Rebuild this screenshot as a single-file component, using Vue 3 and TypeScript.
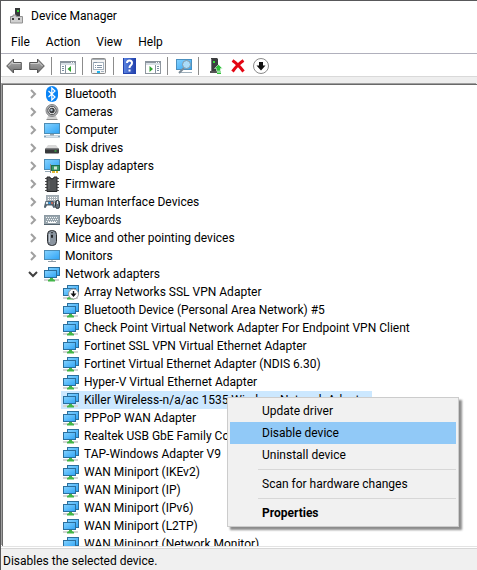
<script setup lang="ts">
import { ref } from 'vue'

interface Category {
  icon: string
  label: string
}

const categories: Category[] = [
  { icon: 'bluetooth', label: 'Bluetooth' },
  { icon: 'camera', label: 'Cameras' },
  { icon: 'computer', label: 'Computer' },
  { icon: 'disk', label: 'Disk drives' },
  { icon: 'display', label: 'Display adapters' },
  { icon: 'firmware', label: 'Firmware' },
  { icon: 'hid', label: 'Human Interface Devices' },
  { icon: 'keyboard', label: 'Keyboards' },
  { icon: 'mouse', label: 'Mice and other pointing devices' },
  { icon: 'monitor', label: 'Monitors' },
]

const adapters: string[] = [
  'Array Networks SSL VPN Adapter',
  'Bluetooth Device (Personal Area Network) #5',
  'Check Point Virtual Network Adapter For Endpoint VPN Client',
  'Fortinet SSL VPN Virtual Ethernet Adapter',
  'Fortinet Virtual Ethernet Adapter (NDIS 6.30)',
  'Hyper-V Virtual Ethernet Adapter',
  'Killer Wireless-n/a/ac 1535 Wireless Network Adapter',
  'PPPoP WAN Adapter',
  'Realtek USB GbE Family Controller',
  'TAP-Windows Adapter V9',
  'WAN Miniport (IKEv2)',
  'WAN Miniport (IP)',
  'WAN Miniport (IPv6)',
  'WAN Miniport (L2TP)',
  'WAN Miniport (Network Monitor)',
]

const disabledAdapter = 'Array Networks SSL VPN Adapter'
const selected = ref('Killer Wireless-n/a/ac 1535 Wireless Network Adapter')
const expanded = ref(true)
const menus = ['File', 'Action', 'View', 'Help']
</script>

<template>
  <div class="window">
    <svg class="defs" width="0" height="0" aria-hidden="true">
      <defs>
        <linearGradient id="screen" x1="0" y1="0" x2="1" y2="1">
          <stop offset="0" stop-color="#86d3ff" />
          <stop offset="1" stop-color="#2ea3f5" />
        </linearGradient>
        <linearGradient id="metal" x1="0" y1="0" x2="0" y2="1">
          <stop offset="0" stop-color="#b4b4b4" />
          <stop offset="1" stop-color="#6e6e6e" />
        </linearGradient>
        <linearGradient id="blue" x1="0" y1="0" x2="1" y2="0">
          <stop offset="0" stop-color="#5a83e0" />
          <stop offset="1" stop-color="#2443ae" />
        </linearGradient>
        <symbol id="i-bluetooth" viewBox="0 0 16 16">
          <rect x="2" y="0" width="12" height="16" rx="6" fill="#0a84f5" />
          <path d="M4.500 5l6.500 6-3.200 3V2l3.200 3-6.500 6" fill="none" stroke="#fff" stroke-width="1.200" />
        </symbol>
        <symbol id="i-camera" viewBox="0 0 16 16">
          <path d="M4 12h8l1.500 3.500h-11z" fill="#d2d2d2" />
          <path d="M2.500 15.500h11" stroke="#8b8b8b" />
          <circle cx="8" cy="6.500" r="6" fill="#b5b6b8" stroke="#86878a" />
          <circle cx="8" cy="6.500" r="4.200" fill="#e4e5e6" stroke="#4c4d4f" />
          <circle cx="8" cy="6.500" r="2.700" fill="#35373a" />
          <circle cx="7.500" cy="6" r="1.200" fill="#aebdcb" />
        </symbol>
        <symbol id="i-computer" viewBox="0 0 16 16">
          <rect x=".5" y="1.500" width="15" height="10" fill="url(#screen)" stroke="#4d8db5" />
          <path d="M6 12h4v1.500h-4z" fill="#9aa4ac" />
          <path d="M0 14.500h16" stroke="#8aa5b8" stroke-width="2" />
          <path d="M2 14.500h12" stroke="#d9e4ec" />
        </symbol>
        <symbol id="i-disk" viewBox="0 0 16 16">
          <path d="M4 5h8l3 4H1z" fill="#d9d9d9" />
          <rect x="1" y="8.500" width="14" height="5" rx=".8" fill="#38393b" />
          <path d="M1.500 9h13" stroke="#77787a" />
          <rect x="10.500" y="10.500" width="2" height="1" fill="#39e24a" />
        </symbol>
        <symbol id="i-display" viewBox="0 0 16 16">
          <rect x=".5" y="1.500" width="15" height="10" fill="url(#screen)" stroke="#4d8db5" />
          <path d="M1 13.500h5" stroke="#94a8b5" />
          <rect x="7.500" y="7.500" width="8" height="5" fill="#3b9a68" stroke="#1f6e49" />
          <rect x="10" y="8.500" width="3" height="3" fill="#cfe6d6" />
          <path d="M6.500 6v9" stroke="#8a8a8a" />
          <path d="M8 14h3M12 14h2" stroke="#e3b833" stroke-width="2" />
        </symbol>
        <symbol id="i-firmware" viewBox="0 0 16 16">
          <path d="M1 2.500h14M1 5.500h14M1 8.500h14M1 11.500h14M1 14.500h14" stroke="#555" />
          <path d="M3 1h3a2 2 0 0 0 4 0h3v14.500H3z" fill="#505254" stroke="#28292b" />
          <path d="M5 5v8" stroke="#6d6f71" />
        </symbol>
        <symbol id="i-keyboard" viewBox="0 0 16 16">
          <rect x=".5" y="3.500" width="15" height="9" fill="#98a5ad" stroke="#8b99a2" />
          <path d="M2 5.500h12M2 9.500h12" stroke="#f1f5f7" stroke-dasharray="1 1" />
          <path d="M3 7.500h11" stroke="#f1f5f7" stroke-dasharray="1 1" />
          <path d="M4 10.500h8" stroke="#fff" />
          <path d="M0 12.500h16" stroke="#53636e" />
        </symbol>
        <symbol id="i-hid" viewBox="0 0 16 16">
          <rect x="2.500" y="1.500" width="12" height="7" fill="#aab3b9" stroke="#a0abb3" />
          <path d="M4 3.500h10M4 5.500h10" stroke="#fff" stroke-dasharray="1 1" />
          <path d="M1.500 7h8l1.500 5.500q0 2-1.500 1.500L8 11.500H3L1.500 14Q0 14.500 0 12.500z" fill="#53636f" />
          <circle cx="3" cy="9" r="1.200" fill="#e5edf2" />
          <path d="M4.500 8h2v2h-2z" fill="#2f9be5" />
          <circle cx="8" cy="9" r="1" fill="#db6652" />
          <rect x="11.500" y="6.500" width="4" height="8" rx="2" fill="#63717c" stroke="#2d3337" />
          <path d="M13.500 7v3" stroke="#e5edf2" />
        </symbol>
        <symbol id="i-mouse" viewBox="0 0 16 16">
          <rect x="3.500" y=".5" width="9" height="15" rx="4" fill="#8a949f" stroke="#2b2d30" />
          <path d="M5.500 4v8" stroke="#c5ccd3" />
          <rect x="7" y="2" width="2" height="6" rx="1" fill="#25272a" />
          <path d="M8 3v2" stroke="#c4d7e8" />
        </symbol>
        <symbol id="i-monitor" viewBox="0 0 16 16">
          <rect x=".5" y="2.500" width="15" height="9" fill="url(#screen)" stroke="#4d8db5" />
          <path d="M8 12v1.500M4 13.500h8" stroke="#8f9da7" />
        </symbol>
        <symbol id="i-network" viewBox="0 0 16 16">
          <rect x="4.500" y="1.500" width="11" height="8" fill="url(#screen)" stroke="#2b6f9d" />
          <path d="M0 14h15" stroke="#d4d4d4" stroke-width="2" />
          <path d="M6 12h3v1l2 1v1.500H4V14l2-1z" fill="#43b649" />
          <rect x=".5" y="4.500" width="12" height="7" fill="url(#screen)" stroke="#2b6f9d" />
        </symbol>
        <symbol id="i-arrow" viewBox="0 0 16 16">
          <path d="M.7 8L7.500 1v3.500h7.800v7H7.500V15z" fill="url(#metal)" stroke="#555" />
          <path d="M2.500 8l4-4v1.500h8" fill="none" stroke="#ccc" />
        </symbol>
        <symbol id="i-panel" viewBox="0 0 16 16">
          <rect x=".5" y="3.500" width="15" height="12" fill="#fff" stroke="#8f979f" />
          <path d="M0 4h16" stroke="#8b949e" stroke-width="2" />
          <path d="M11 4.500h1M13 4.500h1" stroke="#fff" />
          <path d="M1 6h14" stroke="#d8dfe6" stroke-width="2" />
        </symbol>
      </defs>
    </svg>

    <header class="title-bar">
      <svg class="icon" viewBox="0 0 16 16" aria-hidden="true">
        <path d="M6 0h5v8H6z" fill="#38393b" />
        <rect x="8" y="2" width="2" height="2" fill="#35e035" />
        <path d="M1.500 8.500H4V7h3v1.500h6.500v6.500h-12z" fill="#d0d0d0" stroke="#929292" />
        <path d="M3 10h2v2H3zM9 10h2v2H9z" fill="#414141" />
      </svg>
      <h1 class="title">Device Manager</h1>
    </header>

    <nav class="menu-bar" aria-label="Main menu">
      <button v-for="menu in menus" :key="menu" type="button" class="menu-button">{{ menu }}</button>
    </nav>

    <div class="toolbar" role="toolbar" aria-label="Tools">
      <button type="button" class="tool" aria-label="Back">
        <svg class="icon"><use href="#i-arrow" /></svg>
      </button>
      <button type="button" class="tool" aria-label="Forward">
        <svg class="icon flipped"><use href="#i-arrow" /></svg>
      </button>
      <span class="divider"></span>
      <button type="button" class="tool" aria-label="Show or hide console tree">
        <svg class="icon" viewBox="0 0 16 16">
          <use href="#i-panel" width="16" height="16" />
          <path d="M5.500 7v8" stroke="#8793a0" />
          <path d="M2 8.500h2M2 10.500h2M2 12.500h2" stroke="#7c8fa3" />
          <path d="M11 8v6L7.500 11z" fill="#2fa32f" />
        </svg>
      </button>
      <span class="divider"></span>
      <button type="button" class="tool" aria-label="Properties">
        <svg class="icon" viewBox="0 0 16 16">
          <rect x=".5" y=".5" width="14" height="15" rx="1" fill="#f5f5f5" stroke="#8b8b8b" />
          <path d="M1 1.500h13" stroke="#a6adb3" />
          <rect x="2.500" y="4.500" width="10" height="7" fill="#fff" stroke="#a6b3bf" />
          <path d="M3 4.500h3M4 7.500h1M6 7.500h5M4 9.500h1M6 9.500h5" stroke="#8193a5" />
          <path d="M6 14h3" stroke="#20b4ee" stroke-width="2" />
          <path d="M10 13.500h3" stroke="#a6b3bf" />
        </svg>
      </button>
      <span class="divider"></span>
      <button type="button" class="tool" aria-label="Help">
        <svg class="icon" viewBox="0 0 16 16">
          <rect x="1" y="0" width="13" height="16" fill="#2443ae" />
          <rect x="2" y="0" width="11" height="15" fill="url(#blue)" />
          <path d="M5 5q0-2.500 2.500-2.500T10 5q0 1.500-1.300 2.300T7.500 10" fill="none" stroke="#fff" stroke-width="2" />
          <rect x="6.500" y="11.500" width="2" height="2" fill="#fff" />
        </svg>
      </button>
      <button type="button" class="tool" aria-label="Show or hide action pane">
        <svg class="icon" viewBox="0 0 16 16">
          <use href="#i-panel" width="16" height="16" />
          <path d="M10.500 7v8" stroke="#8793a0" />
          <path d="M12 8.500h2M12 10.500h2M12 12.500h2" stroke="#7c8fa3" />
          <path d="M4.500 8v6L8 11z" fill="#2fa32f" />
        </svg>
      </button>
      <span class="divider"></span>
      <button type="button" class="tool" aria-label="Scan for hardware changes">
        <svg class="icon" viewBox="0 0 16 16">
          <rect x=".5" y="1.500" width="15" height="10" fill="url(#screen)" stroke="#4a90c0" />
          <path d="M3 14.500h13" stroke="#9fb0bc" />
          <path d="M8 10l-5 5" stroke="#7c8b96" stroke-width="2" />
          <circle cx="10.500" cy="6.500" r="4" fill="#a9dcfa" stroke="#8298a6" />
        </svg>
      </button>
      <span class="divider"></span>
      <button type="button" class="tool" aria-label="Update driver">
        <svg class="icon" viewBox="0 0 16 16">
          <path d="M4 0h6l1 1v12H4z" fill="#3b3d3f" />
          <path d="M3 14h7" stroke="#555" stroke-width="2" />
          <path d="M4.500 1v12" stroke="#77797b" />
          <rect x="6" y="3" width="2" height="2" fill="#38e038" />
          <path d="M11.500 6.500l4 4H13.500v2.500h-4v-2.500h-2z" fill="#2fc13a" stroke="#fff" stroke-width=".5" />
          <path d="M10 14h4M10 15.500h4" stroke="#2fc13a" />
        </svg>
      </button>
      <button type="button" class="tool" aria-label="Uninstall device">
        <svg class="icon" viewBox="0 0 16 16">
          <path d="M2.500 2.500Q8 6 13.500 13.500M13.500 2.500Q8 6 2.500 13.500" fill="none" stroke="#e30613" stroke-width="3" />
        </svg>
      </button>
      <button type="button" class="tool" aria-label="Disable device">
        <svg class="icon" viewBox="0 0 16 16">
          <circle cx="8" cy="8" r="7.500" fill="#fff" stroke="#8a8a8a" />
          <path d="M6 4h4v3.500h2.500L8 12.500 3.500 7.500H6z" fill="#111" />
        </svg>
      </button>
    </div>

    <main class="tree-frame">
      <ul class="tree">
        <li v-for="item in categories" :key="item.label" class="row">
          <button type="button" class="chevron" :aria-label="'Expand ' + item.label">
            <svg class="chevron-icon" viewBox="0 0 8 10"><path d="M2 1l4 4-4 4" fill="none" stroke="#a0a0a0" stroke-width="2" /></svg>
          </button>
          <svg class="icon" aria-hidden="true"><use :href="'#i-' + item.icon" /></svg>
          <span class="label">{{ item.label }}</span>
        </li>
        <li>
          <div class="row">
            <button type="button" class="chevron" aria-label="Toggle network adapters" @click="expanded = !expanded">
              <svg class="chevron-icon open" viewBox="0 0 10 8"><path d="M1 2l4 4 4-4" fill="none" stroke="#404040" stroke-width="2" /></svg>
            </button>
            <svg class="icon" aria-hidden="true"><use href="#i-network" /></svg>
            <span class="label">Network adapters</span>
          </div>
          <ul v-if="expanded" class="children">
            <li
              v-for="name in adapters"
              :key="name"
              class="row child"
              :class="{ selected: name === selected }"
              @click="selected = name"
            >
              <svg class="icon" viewBox="0 0 16 16" aria-hidden="true">
                <use href="#i-network" width="16" height="16" />
                <g v-if="name === disabledAdapter">
                  <circle cx="10.500" cy="10" r="5" fill="#fff" stroke="#999" />
                  <path d="M9.800 7h1.400v2.500h2.300l-3 3.500-3-3.500h2.300z" fill="#111" />
                </g>
              </svg>
              <span class="label">{{ name }}</span>
            </li>
          </ul>
        </li>
      </ul>
    </main>

    <footer class="status">Disables the selected device.</footer>

    <div class="context-menu" role="menu">
      <button type="button" class="command" role="menuitem">Update driver</button>
      <button type="button" class="command active" role="menuitem">Disable device</button>
      <button type="button" class="command" role="menuitem">Uninstall device</button>
      <hr class="rule" />
      <button type="button" class="command" role="menuitem">Scan for hardware changes</button>
      <hr class="rule" />
      <button type="button" class="command default" role="menuitem">Properties</button>
    </div>
  </div>
</template>

<style>
body {
  margin: 0;
}
</style>

<style scoped>
.window {
  position: relative;
  display: flex;
  flex-direction: column;
  box-sizing: border-box;
  height: 100vh;
  overflow: hidden;
  border-top: 1px solid #58585a;
  border-left: 1px solid #58585a;
  background: #fff;
  color: #000;
  font: 12px/18px "Segoe UI", Roboto, "Open Sans", sans-serif;
}
.defs {
  position: absolute;
}
button {
  margin: 0;
  padding: 0;
  border: 0;
  background: none;
  color: inherit;
  font: inherit;
}
.icon {
  display: block;
  flex: none;
  width: 16px;
  height: 16px;
}
.flipped {
  transform: scaleX(-1);
}
.title-bar {
  display: flex;
  align-items: center;
  gap: 6px;
  height: 30px;
  padding-left: 8px;
}
.title {
  margin: 0;
  font-size: 12px;
  font-weight: 400;
}
.menu-bar {
  display: flex;
  gap: 16px;
  height: 22px;
  padding-left: 10px;
  border-bottom: 1px solid #b0b0bc;
}
.toolbar {
  display: flex;
  align-items: center;
  gap: 7px;
  height: 20px;
  padding: 2px 5px 0;
  border-bottom: 1px solid #d9d9d9;
}
.divider {
  width: 1px;
  height: 18px;
  margin: 0 1px 0 -1px;
  background: #8c8c8c;
}
.tree-frame {
  flex: 1;
  min-height: 0;
  overflow: hidden;
  border-top: 1px solid #696969;
  border-left: 1px solid #696969;
  box-shadow: -1px -1px #a0a0a0, 0 -7px #eee;
  margin: 7px 0 0 1px;
}
.tree,
.children {
  margin: 0;
  padding: 0;
  list-style: none;
}
.tree {
  padding-left: 24px;
}
.children {
  padding-left: 34px;
}
.row {
  display: flex;
  align-items: center;
  height: 18px;
  white-space: nowrap;
}
.child {
  width: max-content;
  padding-left: 2px;
}
.chevron {
  display: flex;
  align-items: center;
  justify-content: center;
  width: 12px;
  height: 18px;
  margin-right: 5px;
}
.chevron-icon {
  width: 8px;
  height: 10px;
}
.chevron-icon.open {
  width: 10px;
  height: 8px;
}
.label {
  margin-left: 3px;
  padding: 0 2px;
}
.selected {
  background: #cce8ff;
}
.status {
  height: 21px;
  padding: 0 2px;
  border-top: 1px solid #d7d7d7;
  box-shadow: 0 -1px #fff, 0 -2px #e3e3e3;
  margin-top: 2px;
  background: #f0f0f0;
  line-height: 24px;
}
.context-menu {
  position: absolute;
  top: 396px;
  left: 226px;
  box-sizing: border-box;
  width: 232px;
  padding: 2px;
  border: 1px solid #ccc;
  background: #f1f1f1;
  box-shadow: 3px 3px 2px rgba(0, 0, 0, 0.45);
}
.command {
  display: block;
  width: 100%;
  height: 22px;
  padding-left: 32px;
  text-align: left;
}
.active {
  background: #91c9f7;
}
.default {
  font-weight: 700;
}
.rule {
  height: 1px;
  margin: 3px 0 3px 28px;
  border: 0;
  background: #d7d7d7;
}
</style>
